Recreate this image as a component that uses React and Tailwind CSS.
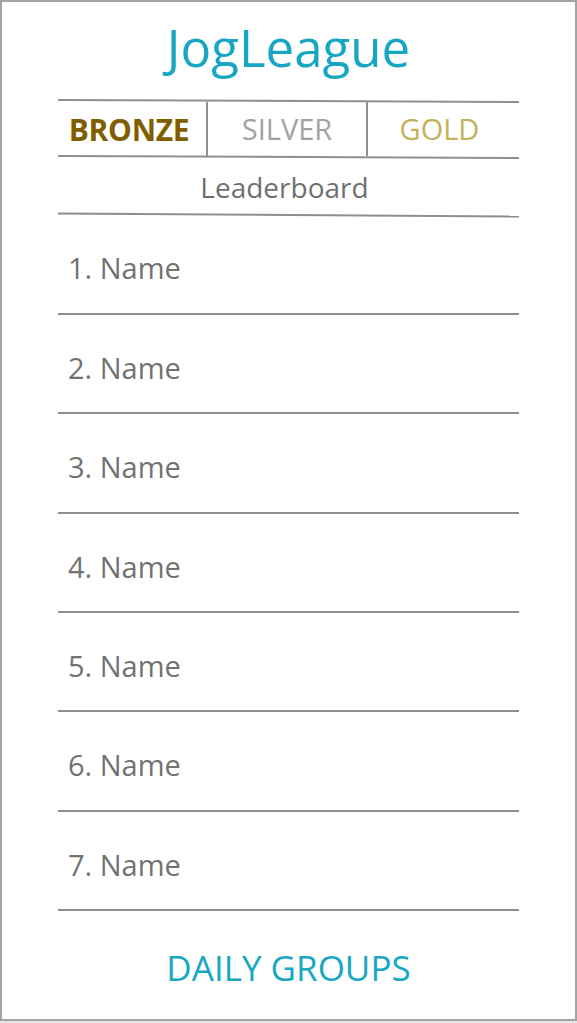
export default function App() {
  const names = [1, 2, 3, 4, 5, 6, 7];
  const font = { fontFamily: '"Open Sans", "Noto Sans", sans-serif' };
  return (
    <div className="w-[577px] h-[1023px] bg-[#e4e4e4]" style={font}>
      <div className="w-[577px] h-[1021px] border-2 border-[#a3a3a3] bg-white flex flex-col items-center">
        <div className="h-[98px] flex items-center justify-center pb-[8px]">
          <h1 className="text-[51px] leading-none text-[#17a7c3]">JogLeague</h1>
        </div>
        <div className="w-[461px]">
          <div className="h-[2px] bg-[#8e8e8e] rotate-[0.25deg]" />
          <div className="flex h-[54px]">
            <div className="w-[148px] flex items-center justify-center pr-[6px]">
              <span className="text-[30px] font-bold text-[#7f5e00] tracking-[-0.3px]">BRONZE</span>
            </div>
            <div className="w-[2px] bg-[#8e8e8e]" />
            <div className="w-[158px] flex items-center justify-center">
              <span className="text-[29px] text-[#a3a3a3]">SILVER</span>
            </div>
            <div className="w-[2px] bg-[#8e8e8e]" />
            <div className="flex-1 flex items-center justify-center pr-[8px]">
              <span className="text-[29px] text-[#c5b15a]">GOLD</span>
            </div>
          </div>
          <div className="h-[2px] bg-[#8e8e8e] rotate-[0.25deg]" />
          <div className="h-[55.5px] flex items-center justify-center pr-[8px] pt-[3px]">
            <span className="text-[28px] text-[#6f6f6f]">Leaderboard</span>
          </div>
          <div className="h-[2px] bg-[#8e8e8e] rotate-[0.4deg]" />
          {names.map((n) => (
            <div key={n}>
              <div className="h-[97.4px] flex items-center pl-[10px] pt-[8px]">
                <span className="text-[29px] text-[#727272]">{n}. Name</span>
              </div>
              <div className="h-[2px] bg-[#8e8e8e]" />
            </div>
          ))}
        </div>
        <div className="flex-1 flex items-center justify-center pt-[6px]">
          <span className="text-[35px] text-[#17a7c3]">DAILY GROUPS</span>
        </div>
      </div>
    </div>
  );
}
